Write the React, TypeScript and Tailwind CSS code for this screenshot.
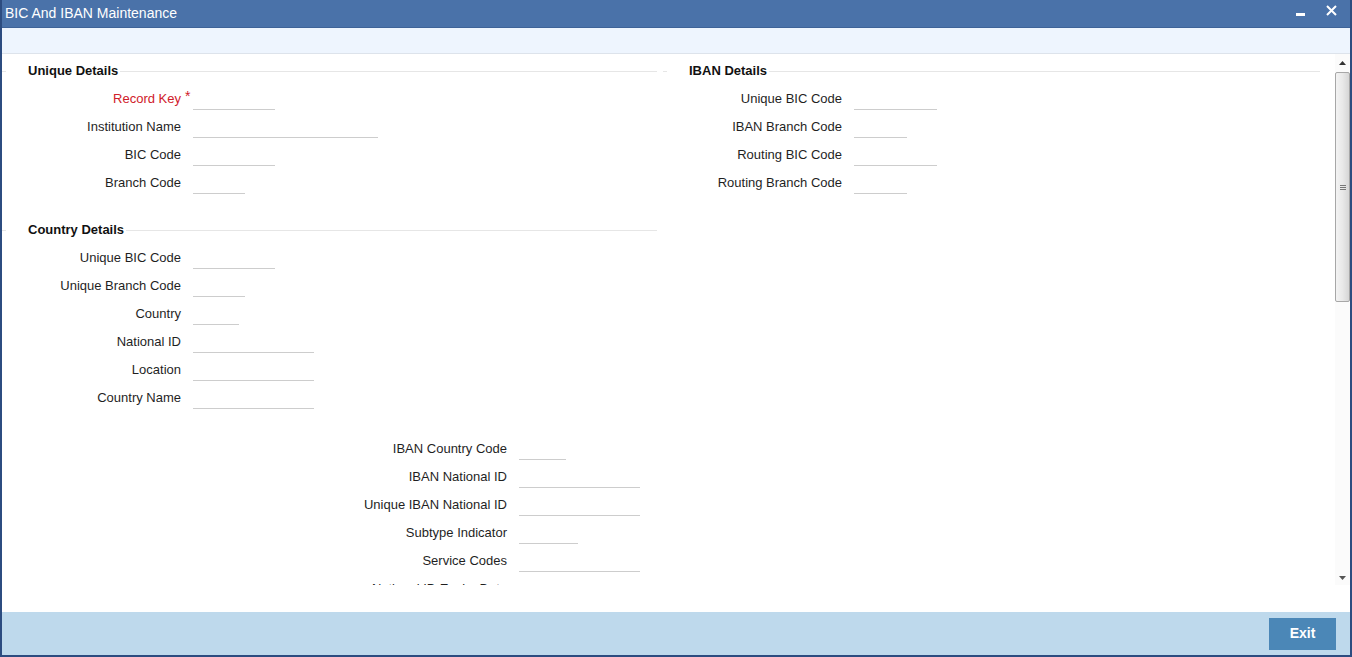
import React from "react";

type FieldDef = {
    label: string;
    width: string;
    required?: boolean;
};

const uniqueDetails: FieldDef[] = [
    { label: "Record Key", width: "w-[82px]", required: true },
    { label: "Institution Name", width: "w-[185px]" },
    { label: "BIC Code", width: "w-[82px]" },
    { label: "Branch Code", width: "w-[52px]" },
];

const ibanDetails: FieldDef[] = [
    { label: "Unique BIC Code", width: "w-[83px]" },
    { label: "IBAN Branch Code", width: "w-[53px]" },
    { label: "Routing BIC Code", width: "w-[83px]" },
    { label: "Routing Branch Code", width: "w-[53px]" },
];

const countryDetails: FieldDef[] = [
    { label: "Unique BIC Code", width: "w-[82px]" },
    { label: "Unique Branch Code", width: "w-[52px]" },
    { label: "Country", width: "w-[46px]" },
    { label: "National ID", width: "w-[121px]" },
    { label: "Location", width: "w-[121px]" },
    { label: "Country Name", width: "w-[121px]" },
];

const ibanCountry: FieldDef[] = [
    { label: "IBAN Country Code", width: "w-[47px]" },
    { label: "IBAN National ID", width: "w-[121px]" },
    { label: "Unique IBAN National ID", width: "w-[121px]" },
    { label: "Subtype Indicator", width: "w-[59px]" },
    { label: "Service Codes", width: "w-[121px]" },
    { label: "National ID Expiry Date", width: "w-[121px]" },
];

function Field({ field }: { field: FieldDef }) {
    return (
        <div className="flex h-[28px] items-center">
            <div className={`w-[179px] text-right ${field.required ? "text-[#d0202a]" : "text-[#1f1f1f]"}`}>
                {field.label}
            </div>
            <div className="w-[12px] self-start pt-[4px] pl-[4px] text-[14px] leading-none text-[#d0202a]">
                {field.required ? "*" : ""}
            </div>
            <div className={`h-[22px] border-b border-[#cdcdcd] ${field.width}`} />
        </div>
    );
}

function Legend({ title }: { title: string }) {
    return (
        <div className="flex h-[28px] items-center">
            <div className="h-px w-[4px] bg-[#e6e6e6]" />
            <div className="w-[22px]" />
            <div className="font-bold text-[#111]">{title}</div>
            <div className="ml-[2px] h-px flex-1 bg-[#e6e6e6]" />
        </div>
    );
}

function Scrollbar() {
    return (
        <div className="flex w-[15px] flex-col bg-[#fbfbfb]">
            <div className="flex h-[18px] items-center justify-center">
                <svg width="7" height="4" viewBox="0 0 7 4">
                    <path d="M0 4 L3.5 0 L7 4 Z" fill="#333" />
                </svg>
            </div>
            <div className="flex h-[230px] items-center justify-center rounded-[2px] border border-[#a7a7a7] bg-gradient-to-r from-[#f3f3f3] via-[#e9e9e9] to-[#d6d6d6]">
                <div className="flex flex-col gap-[1px]">
                    <div className="h-px w-[6px] bg-[#777]" />
                    <div className="h-px w-[6px] bg-[#777]" />
                    <div className="h-px w-[6px] bg-[#777]" />
                </div>
            </div>
            <div className="flex-1" />
            <div className="flex h-[15px] items-center justify-center">
                <svg width="7" height="4" viewBox="0 0 7 4">
                    <path d="M0 0 L3.5 4 L7 0 Z" fill="#555" />
                </svg>
            </div>
        </div>
    );
}

export default function App() {
    return (
        <div className="flex h-[657px] w-[1352px] flex-col border-x-2 border-b-2 border-[#2c4c80] bg-white font-['Liberation_Sans',Arial,sans-serif] text-[13px]">
            {/* Title bar */}
            <div className="flex h-[28px] items-center justify-between border-b border-[#3e6398] bg-[#4a72a9] pl-[3px] text-white">
                <div className="text-[14px]">BIC And IBAN Maintenance</div>
                <div className="flex items-center">
                    <div className="mt-[1px] h-[3px] w-[9px] bg-white" />
                    <svg className="ml-[21px] mr-[13px] mb-[6px]" width="11" height="11" viewBox="0 0 11 11">
                        <path d="M1 1 L10 10 M10 1 L1 10" stroke="white" strokeWidth="2" />
                    </svg>
                </div>
            </div>

            {/* Toolbar */}
            <div className="h-[26px] border-b border-[#dde3eb] bg-[#eef5fe]" />

            {/* Body */}
            <div className="flex h-[558px] flex-col">
                <div className="flex h-[531px]">
                    <div className="flex-1 overflow-hidden pt-[3px]">
                        <div className="flex">
                            <div className="w-[655px]">
                                <Legend title="Unique Details" />
                                {uniqueDetails.map((f) => (
                                    <Field key={f.label} field={f} />
                                ))}
                                <div className="mt-[19px]">
                                    <Legend title="Country Details" />
                                    {countryDetails.map((f) => (
                                        <Field key={f.label} field={f} />
                                    ))}
                                </div>
                            </div>
                            <div className="ml-[6px] w-[657px]">
                                <Legend title="IBAN Details" />
                                {ibanDetails.map((f) => (
                                    <Field key={f.label} field={f} />
                                ))}
                            </div>
                        </div>
                        <div className="mt-[23px] pl-[326px]">
                            {ibanCountry.map((f) => (
                                <Field key={f.label} field={f} />
                            ))}
                        </div>
                    </div>
                    <Scrollbar />
                </div>
            </div>

            {/* Footer */}
            <div className="flex flex-1 items-center justify-end bg-[#bed9ec] pr-[14px]">
                <button className="h-[32px] w-[67px] bg-[#4b87b7] text-[14px] font-bold text-white">
                    Exit
                </button>
            </div>
        </div>
    );
}
